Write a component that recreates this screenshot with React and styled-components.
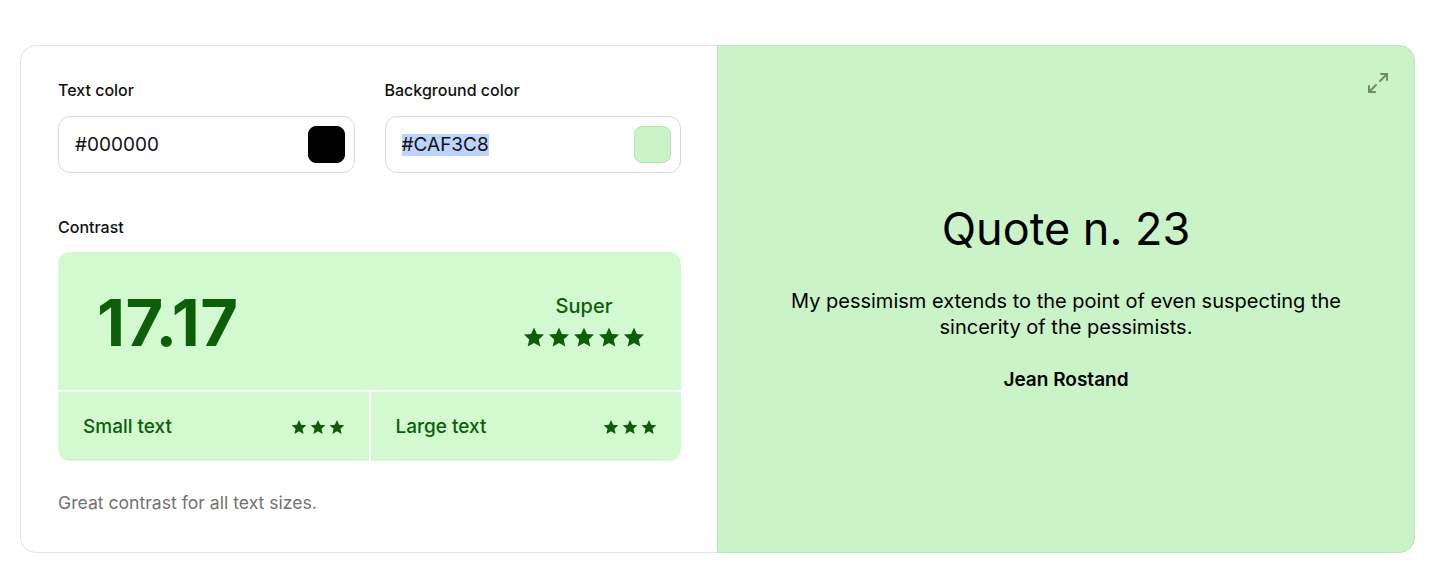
import React from "react";
import styled, { createGlobalStyle } from "styled-components";
import { Maximize2 } from "lucide-react";

const Global = createGlobalStyle`
  html, body { margin: 0; padding: 0; background: #ffffff; }
  body { font-family: Inter, "Noto Sans", sans-serif; color: #111; }
  * { box-sizing: border-box; }
`;

const Page = styled.div`
  padding: 45px 22px 0 20px;
`;

const Card = styled.div`
  display: grid;
  grid-template-columns: 696px 1fr;
  height: 508px;
  border: 1px solid #e2e2e2;
  border-radius: 16px;
  background: #fff;
`;

const Editor = styled.section`
  display: flex;
  flex-direction: column;
  padding: 34px 36px 0 37px;
`;

const Fields = styled.div`
  display: grid;
  grid-template-columns: 1fr 1fr;
  gap: 30px;
`;

const Field = styled.div`
  display: flex;
  flex-direction: column;
  gap: 16px;
`;

const Label = styled.div`
  font-size: 16px;
  line-height: 20px;
  font-weight: 500;
  color: #111;
`;

const InputBox = styled.div`
  display: flex;
  align-items: center;
  justify-content: space-between;
  height: 57px;
  padding: 0 9px 0 16px;
  border: 1px solid #d9d9d9;
  border-radius: 12px;
  background: #fff;
`;

const HexText = styled.span`
  font-size: 19px;
  color: #111;
  background: ${(p) => (p.$selected ? "#bcd3fb" : "transparent")};
  line-height: 22px;
`;

const Swatch = styled.div`
  width: 37px;
  height: 37px;
  border-radius: 8px;
  background: ${(p) => p.$color};
  border: 1px solid ${(p) => p.$border};
`;

const ContrastLabel = styled(Label)`
  margin-top: 44px;
`;

const ContrastBox = styled.div`
  margin-top: 15px;
  display: grid;
  grid-template-columns: 1fr 1fr;
  grid-template-rows: 138px 69px;
  gap: 2px;
  border-radius: 12px;
  overflow: hidden;
  background: #fff;
`;

const ScoreRow = styled.div`
  grid-column: 1 / 3;
  background: #d3f9d1;
  display: flex;
  align-items: center;
  justify-content: space-between;
  padding: 0 36px 0 39px;
  color: #0d5f07;
`;

const Score = styled.div`
  font-size: 65px;
  font-weight: 700;
  letter-spacing: 0.4px;
  line-height: 1;
  margin-top: 2px;
`;

const Rating = styled.div`
  display: flex;
  flex-direction: column;
  align-items: center;
  gap: 8px;
`;

const RatingText = styled.div`
  font-size: 20px;
  font-weight: 500;
  line-height: 24px;
`;

const Stars = styled.div`
  display: flex;
  gap: ${(p) => p.$gap}px;
`;

const SubCell = styled.div`
  background: #d3f9d1;
  display: flex;
  align-items: center;
  justify-content: space-between;
  padding: 0 24px 0 25px;
  color: #0d5f07;
`;

const SubLabel = styled.span`
  font-size: 19px;
  font-weight: 500;
`;

const Note = styled.p`
  margin: 30px 0 0;
  font-size: 17.6px;
  line-height: 24px;
  color: #727272;
`;

const Preview = styled.section`
  position: relative;
  margin: -1px -1px -1px 0;
  background: #caf3c8;
  border: 1px solid #b8e6b5;
  border-radius: 0 16px 16px 0;
  display: flex;
  flex-direction: column;
  align-items: center;
  padding: 154px 50px 0;
  text-align: center;
  color: #000;
`;

const ExpandButton = styled.button`
  position: absolute;
  top: 25px;
  right: 24px;
  background: none;
  border: none;
  padding: 0;
  color: #6f8b6c;
  display: flex;
`;

const Title = styled.h2`
  margin: 0;
  font-size: 45px;
  font-weight: 400;
  line-height: 58px;
`;

const QuoteText = styled.p`
  margin: 30px 0 0;
  font-size: 20px;
  line-height: 26px;
  max-width: 580px;
`;

const Author = styled.p`
  margin: 27px 0 0;
  font-size: 19px;
  font-weight: 600;
  line-height: 26px;
`;

const Star = ({ size }) => (
  <svg width={size} height={size} viewBox="0 0 24 24" fill="#0d5f07">
    <path d="M12 1.5l3.2 7.1 7.8.8-5.8 5.3 1.7 7.7L12 18.5l-6.9 3.9 1.7-7.7L1 9.4l7.8-.8z" />
  </svg>
);

const StarRow = ({ count, size, gap }) => (
  <Stars $gap={gap}>
    {Array.from({ length: count }).map((_, i) => (
      <Star key={i} size={size} />
    ))}
  </Stars>
);

export default function App() {
  return (
    <>
      <Global />
      <Page>
        <Card>
          <Editor>
            <Fields>
              <Field>
                <Label>Text color</Label>
                <InputBox>
                  <HexText>#000000</HexText>
                  <Swatch $color="#000000" $border="#000000" />
                </InputBox>
              </Field>
              <Field>
                <Label>Background color</Label>
                <InputBox>
                  <HexText $selected>#CAF3C8</HexText>
                  <Swatch $color="#caf3c8" $border="#b6e4b3" />
                </InputBox>
              </Field>
            </Fields>
            <ContrastLabel>Contrast</ContrastLabel>
            <ContrastBox>
              <ScoreRow>
                <Score>17.17</Score>
                <Rating>
                  <RatingText>Super</RatingText>
                  <StarRow count={5} size={22} gap={3} />
                </Rating>
              </ScoreRow>
              <SubCell>
                <SubLabel>Small text</SubLabel>
                <StarRow count={3} size={16} gap={3} />
              </SubCell>
              <SubCell>
                <SubLabel>Large text</SubLabel>
                <StarRow count={3} size={16} gap={3} />
              </SubCell>
            </ContrastBox>
            <Note>Great contrast for all text sizes.</Note>
          </Editor>
          <Preview>
            <ExpandButton aria-label="Expand">
              <Maximize2 size={24} strokeWidth={2} />
            </ExpandButton>
            <Title>Quote n. 23</Title>
            <QuoteText>
              My pessimism extends to the point of even suspecting the sincerity of the pessimists.
            </QuoteText>
            <Author>Jean Rostand</Author>
          </Preview>
        </Card>
      </Page>
    </>
  );
}
